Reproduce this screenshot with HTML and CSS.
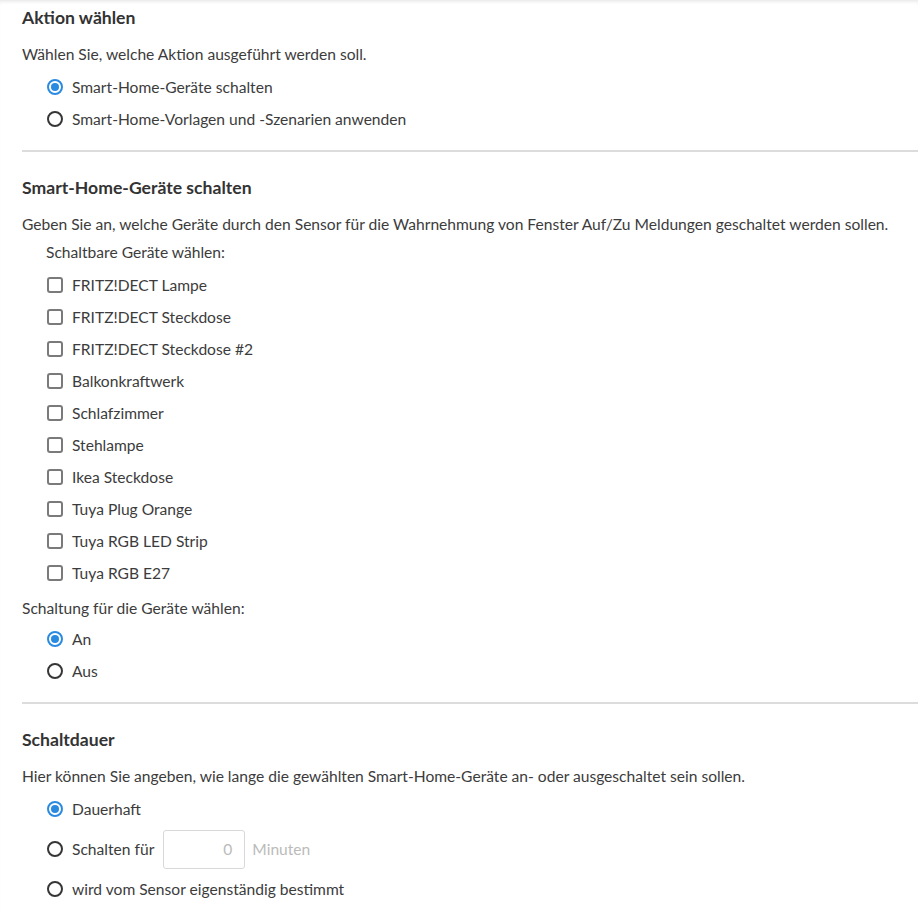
FILE: index.html
```html
<!DOCTYPE html>
<html lang="de">
<head>
<meta charset="utf-8">
<link rel="stylesheet" href="styles.css">
</head>
<body>
<div class="page">
  <section class="block">
    <h2 class="title">Aktion wählen</h2>
    <p class="desc">Wählen Sie, welche Aktion ausgeführt werden soll.</p>
    <div class="options">
      <label class="opt"><span class="radio checked"></span>Smart-Home-Geräte schalten</label>
      <label class="opt"><span class="radio"></span>Smart-Home-Vorlagen und -Szenarien anwenden</label>
    </div>
  </section>
  <hr class="divider">
  <section class="block">
    <h2 class="title">Smart-Home-Geräte schalten</h2>
    <p class="desc">Geben Sie an, welche Geräte durch den Sensor für die Wahrnehmung von Fenster Auf/Zu Meldungen geschaltet werden sollen.</p>
    <p class="sub">Schaltbare Geräte wählen:</p>
    <div class="options">
      <label class="opt"><span class="check"></span>FRITZ!DECT Lampe</label>
      <label class="opt"><span class="check"></span>FRITZ!DECT Steckdose</label>
      <label class="opt"><span class="check"></span>FRITZ!DECT Steckdose #2</label>
      <label class="opt"><span class="check"></span>Balkonkraftwerk</label>
      <label class="opt"><span class="check"></span>Schlafzimmer</label>
      <label class="opt"><span class="check"></span>Stehlampe</label>
      <label class="opt"><span class="check"></span>Ikea Steckdose</label>
      <label class="opt"><span class="check"></span>Tuya Plug Orange</label>
      <label class="opt"><span class="check"></span>Tuya RGB LED Strip</label>
      <label class="opt"><span class="check"></span>Tuya RGB E27</label>
    </div>
    <p class="label">Schaltung für die Geräte wählen:</p>
    <div class="options options-tight">
      <label class="opt"><span class="radio checked"></span>An</label>
      <label class="opt"><span class="radio"></span>Aus</label>
    </div>
  </section>
  <hr class="divider">
  <section class="block">
    <h2 class="title">Schaltdauer</h2>
    <p class="desc">Hier können Sie angeben, wie lange die gewählten Smart-Home-Geräte an- oder ausgeschaltet sein sollen.</p>
    <div class="options">
      <label class="opt"><span class="radio checked"></span>Dauerhaft</label>
      <label class="opt opt-input"><span class="radio"></span>Schalten für<span class="field">0</span><span class="unit">Minuten</span></label>
      <label class="opt"><span class="radio"></span>wird vom Sensor eigenständig bestimmt</label>
    </div>
  </section>
</div>
</body>
</html>
```

FILE: styles.css
```css
* { box-sizing: border-box; }
html, body { margin: 0; padding: 0; background: #fff; }
body {
  font-family: "Lato", "Liberation Sans", sans-serif;
  font-size: 15.6px;
  color: #3c3c3c;
}
.page {
  min-height: 913px;
  padding: 0 0 0 22px;
  box-shadow: inset 0 4px 4px -3px rgba(0,0,0,0.12);
}
.block { padding-top: 7px; }
.title {
  margin: 0;
  font-size: 17.6px;
  font-weight: 700;
  line-height: 22px;
  color: #333;
}
.desc {
  margin: 14px 0 0;
  line-height: 22px;
}
.sub {
  margin: 6px 0 0 24px;
  line-height: 22px;
}
.label {
  margin: 8px 0 0;
  line-height: 22px;
}
.options {
  display: flex;
  flex-direction: column;
  padding-left: 25px;
  margin-top: 6px;
}
.options-tight { margin-top: 4px; }
.opt {
  display: flex;
  align-items: center;
  height: 32px;
  gap: 9px;
}
.radio, .check {
  width: 16px;
  height: 16px;
  flex: none;
  display: inline-block;
  position: relative;
}
.radio {
  border: 2px solid #363636;
  border-radius: 50%;
}
.radio.checked { border-color: #2a8ae0; }
.radio.checked::after {
  content: "";
  position: absolute;
  left: 2px; top: 2px;
  width: 8px; height: 8px;
  border-radius: 50%;
  background: #2a8ae0;
}
.check {
  border: 2px solid #7a7a7a;
  border-radius: 3px;
}
.divider {
  border: 0;
  border-top: 2px solid #dcdcdc;
  margin: 15px 0 18px;
}
.opt-input { height: 48px; }
.field {
  width: 82px;
  height: 39px;
  border: 1px solid #d8d8d8;
  border-radius: 3px;
  display: flex;
  align-items: center;
  justify-content: flex-end;
  padding-right: 12px;
  color: #bbb;
}
.unit { color: #bbb; margin-left: -2px; }
```
